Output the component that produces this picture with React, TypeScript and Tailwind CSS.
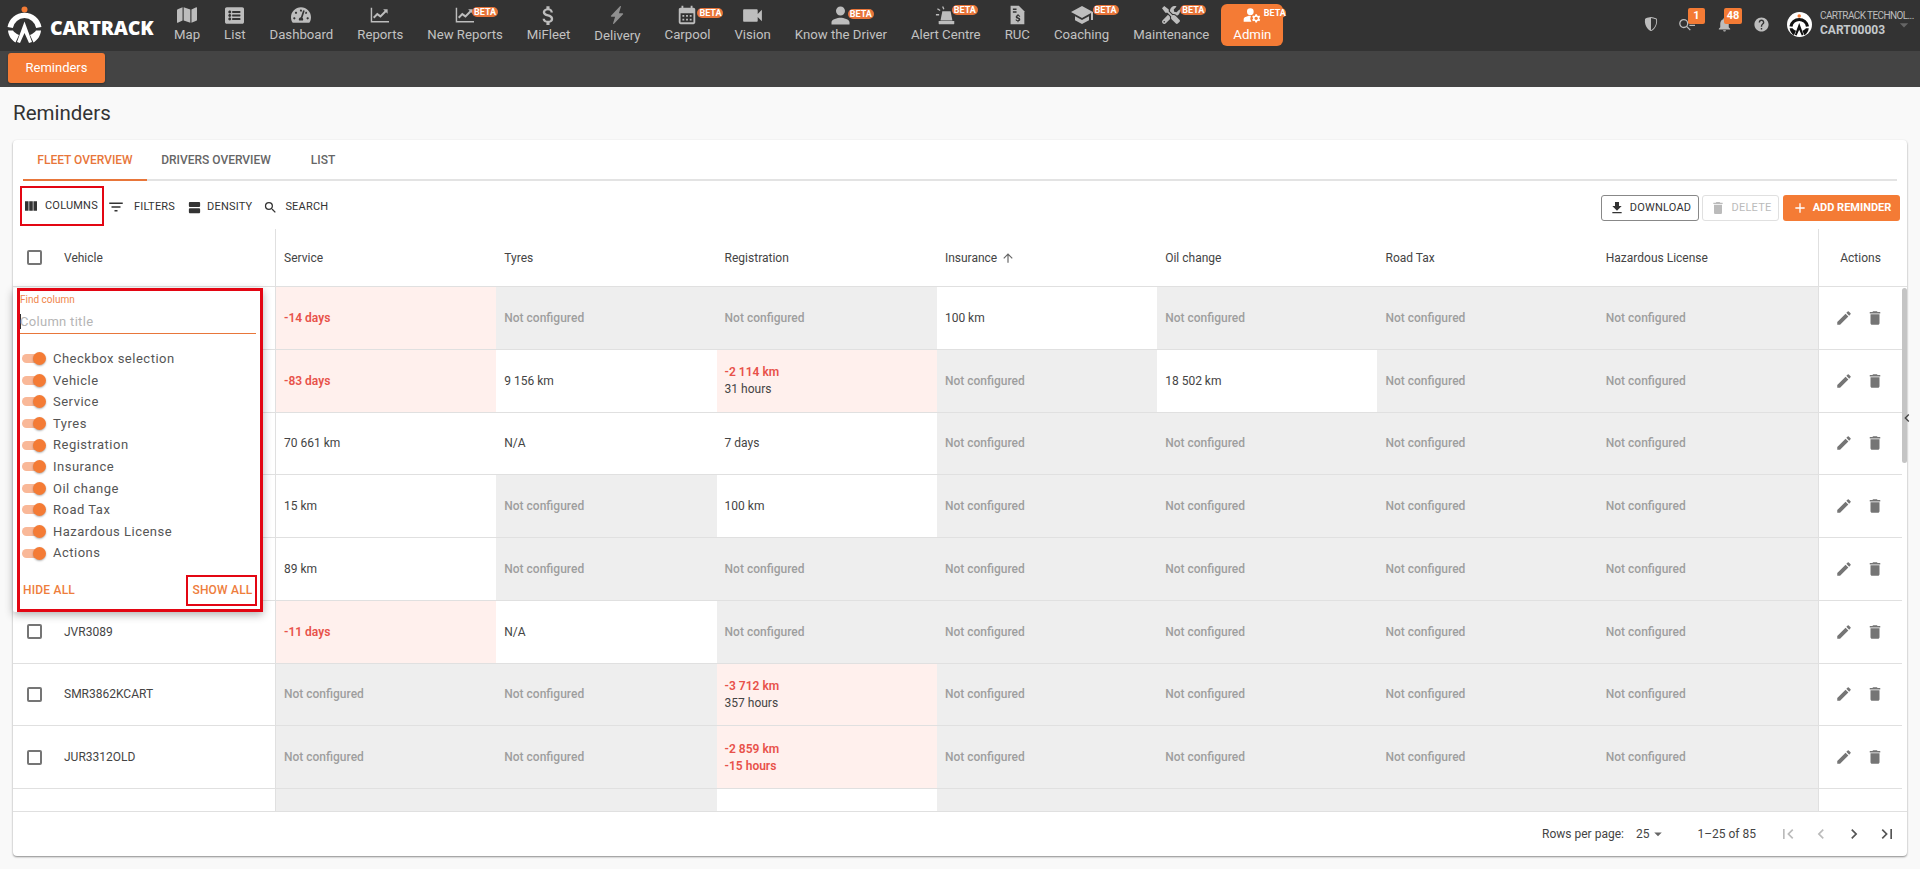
import React from "react";
import {
  MdVideocam, MdPerson, MdSchool, MdManageAccounts, MdNotifications, MdHelp, MdViewColumn,
  MdFilterList, MdViewAgenda, MdSearch, MdFileDownload, MdDelete, MdEdit, MdFirstPage, MdLastPage,
  MdChevronLeft, MdChevronRight, MdArrowUpward, MdAdd, MdArrowDropDown, MdCalendarMonth, MdAttachMoney,
} from "react-icons/md";
import { FaListAlt, FaMap, FaTachometerAlt, FaTools } from "react-icons/fa";
import { BsLightningChargeFill, BsShieldShaded } from "react-icons/bs";

function Logo({ dark = false, small = false }: { dark?: boolean; small?: boolean }) {
  const c = dark ? "#111" : "#fff";
  return (
    <svg viewBox="0 0 36 38" className={small ? "w-[21px] h-[22px]" : "w-[36px] h-[38px]"} fill="none">
      <circle cx="17.5" cy="3.6" r="3" fill="#f47b35" />
      <path d="M3.2 21.5 A14.5 14.5 0 0 1 31.8 21.5" stroke={c} strokeWidth="5.4" />
      <path d="M1 24.5 C1.5 30 4.5 34 8.5 36.5 L12 29 C9 27.5 7 26 6 24.5 Z" fill={c} />
      <path d="M34 24.5 C33.5 30 30.5 34 26.5 36.5 L23 29 C26 27.5 28 26 29 24.5 Z" fill={c} />
      <path d="M10 36 L17.5 15.5 L25 36 L22 37 L17.5 27 L13 37 Z" fill={c} />
    </svg>
  );
}

function Siren() {
  return (
    <svg viewBox="0 0 24 24" className="w-[22px] h-[22px]" fill="currentColor">
      <path d="M8 8h9l2 10H6z" />
      <rect x="4" y="18.5" width="17" height="3.500" rx="0.5" />
      <path d="M1 11h3.500v1.500H1zM3 4.500l3 2-.8 1.200-3-2zM9 2.500l1.300 3-1.300.6-1.300-3z" />
    </svg>
  );
}

function Ruc() {
  return (
    <svg viewBox="0 0 24 24" className="w-[22px] h-[22px]" fill="currentColor">
      <path d="M5 2h9l6 6v14H5z" />
      <path d="M7.500 5h4v1.500h-4zM7.500 8h4v1.500h-4z" fill="#333" />
      <path d="M12.600 11v1.100c-1.200.2-2 1-2 2 0 1.200 1 1.700 2 2 .9.300 1.200.5 1.200.9s-.4.700-1 .7-1.100-.3-1.200-.8h-1.200c.1 1.100 1 1.800 2.200 1.900V20h1v-1.200c1.200-.2 2-.9 2-2 0-1.300-1-1.800-2-2.100-.9-.3-1.200-.5-1.200-.8 0-.4.4-.7.9-.7s.9.300 1 .7h1.200c-.1-1-.9-1.700-1.900-1.800V11z" fill="#333" />
    </svg>
  );
}

function Chart() {
  return (
    <svg viewBox="0 0 22 20" className="w-[20px] h-[18px]" fill="none" stroke="currentColor">
      <path d="M1.500 2v15.500H21" strokeWidth="1.600" />
      <path d="M4 13l4-4 3.500 2.500 6-6" strokeWidth="2.200" />
      <path d="M14.500 3.500h5v5z" fill="currentColor" stroke="none" />
    </svg>
  );
}

type NavItem = { label: string; icon: React.ReactNode; beta?: string; dim?: boolean };
const nav: NavItem[] = [
  { label: "Map", icon: <FaMap size={20} /> },
  { label: "List", icon: <FaListAlt size={19} /> },
  { label: "Dashboard", icon: <FaTachometerAlt size={20} /> },
  { label: "Reports", icon: <Chart /> },
  { label: "New Reports", icon: <Chart />, beta: "ml-[7px] top-[7px]" },
  { label: "MiFleet", icon: <MdAttachMoney size={25} /> },
  { label: "Delivery", icon: <BsLightningChargeFill size={18} />, dim: true },
  { label: "Carpool", icon: <MdCalendarMonth size={22} />, beta: "ml-[10px] top-[8px]" },
  { label: "Vision", icon: <MdVideocam size={25} /> },
  { label: "Know the Driver", icon: <MdPerson size={27} />, beta: "ml-[7px] top-[9px]" },
  { label: "Alert Centre", icon: <Siren />, beta: "ml-[6px] top-[5px]" },
  { label: "RUC", icon: <Ruc /> },
  { label: "Coaching", icon: <MdSchool size={24} />, beta: "ml-[11px] top-[5px]" },
  { label: "Maintenance", icon: <FaTools size={18} />, beta: "ml-[9px] top-[5px]" },
];

function Beta({ cls }: { cls: string }) {
  return (
    <span className={`absolute left-1/2 ${cls} h-[10px] w-[26px] rounded-full bg-[#e8753a] text-white text-[9px] leading-[10px] font-bold text-center`}>
      BETA
    </span>
  );
}

type Cell = { t?: string; t2?: string; k: "nc" | "red" | "plain" | "blank" | "gray"; red2?: boolean };
const nc: Cell = { t: "Not configured", k: "nc" };
const p = (t: string): Cell => ({ t, k: "plain" });
const r = (t: string, t2?: string, red2?: boolean): Cell => ({ t, t2, k: "red", red2 });
const rows: { v: string; cells: Cell[] }[] = [
  { v: "", cells: [r("-14 days"), nc, nc, p("100 km"), nc, nc, nc] },
  { v: "", cells: [r("-83 days"), p("9 156 km"), r("-2 114 km", "31 hours"), nc, p("18 502 km"), nc, nc] },
  { v: "", cells: [p("70 661 km"), p("N/A"), p("7 days"), nc, nc, nc, nc] },
  { v: "", cells: [p("15 km"), nc, p("100 km"), nc, nc, nc, nc] },
  { v: "", cells: [p("89 km"), nc, nc, nc, nc, nc, nc] },
  { v: "JVR3089", cells: [r("-11 days"), p("N/A"), nc, nc, nc, nc, nc] },
  { v: "SMR3862KCART", cells: [nc, nc, r("-3 712 km", "357 hours"), nc, nc, nc, nc] },
  { v: "JUR3312OLD", cells: [nc, nc, r("-2 859 km", "-15 hours", true), nc, nc, nc, nc] },
  { v: "", cells: [{ k: "gray" }, { k: "gray" }, { k: "blank" }, { k: "gray" }, { k: "gray" }, { k: "gray" }, { k: "gray" }] },
];

const colGrid = "grid grid-cols-[263px_repeat(7,220.3px)_1fr]";
const cols = ["Service", "Tyres", "Registration", "Insurance", "Oil change", "Road Tax", "Hazardous License"];
const toggles = ["Checkbox selection", "Vehicle", "Service", "Tyres", "Registration", "Insurance", "Oil change", "Road Tax", "Hazardous License", "Actions"];

function Box() {
  return <span className="block w-[15px] h-[15px] shrink-0 border-2 border-[#757575] rounded-[2px]" />;
}

function DataCell({ c }: { c: Cell }) {
  const bg = c.k === "nc" || c.k === "gray" ? "bg-[#eeeeee]" : c.k === "red" ? "bg-[#fff0ed]" : "bg-white";
  return (
    <div className={`${bg} pl-[8px] pt-[1px] flex flex-col justify-center text-[12px] leading-[17px]`}>
      {c.t && (
        <span className={c.k === "nc" ? "text-[#9e9e9e] font-medium" : c.k === "red" ? "text-[#e8524a] font-semibold" : "text-[#444]"}>{c.t}</span>
      )}
      {c.t2 && <span className={c.red2 ? "text-[#e8524a] font-semibold" : "text-[#444]"}>{c.t2}</span>}
    </div>
  );
}

export default function App() {
  return (
    <div className="w-full h-[869px] overflow-hidden flex flex-col bg-[#f9f9f9] font-['Roboto',sans-serif] text-[#333]">
      <header className="h-[51px] shrink-0 bg-[#333333] flex">
        <div className="w-[162px] shrink-0 flex items-start pl-[7px] pt-[6px]">
          <Logo />
          <span className="ml-[7px] mt-[9px] text-white text-[19.5px] leading-[26px] font-black tracking-[-0.2px] font-['Open_Sans',sans-serif]">CARTRACK</span>
        </div>
        <nav className="flex">
          {nav.map((n) => (
            <div key={n.label} className="relative px-3 flex flex-col items-center pt-[4px] text-[#c2c2c2]">
              <div className={`h-[22px] flex items-center justify-center ${n.dim ? "text-[#8f8f8f]" : "text-[#bdbdbd]"}`}>{n.icon}</div>
              <span className={`text-[13.2px] whitespace-nowrap leading-[20px] ${n.dim ? "" : "-mt-[1px]"}`}>{n.label}</span>
              {n.beta && <Beta cls={n.beta} />}
            </div>
          ))}
          <div className="relative mt-[4px] w-[62px] h-[42px] rounded-[6px] bg-[#f47b35] flex flex-col items-center text-white">
            <div className="h-[22px] flex items-center"><MdManageAccounts size={20} /></div>
            <span className="text-[13.2px] leading-[20px] -mt-[1px]">Admin</span>
            <span className="absolute left-1/2 ml-[11px] top-[4px] w-[23px] h-[10px] rounded-full bg-[#f47b35] text-white text-[9px] leading-[10px] font-bold text-center">BETA</span>
          </div>
        </nav>
        <div className="ml-auto flex items-start text-[#bdbdbd]">
          <div className="w-[37px] h-[48px] flex items-center justify-center"><BsShieldShaded size={14} /></div>
          <div className="relative w-[37px] h-[48px] flex items-center justify-center">
            <svg viewBox="0 0 20 16" className="w-[19px] h-[15px]" fill="none" stroke="currentColor" strokeWidth="1.4">
              <circle cx="6" cy="7" r="4.2" />
              <path d="M9 10l4 4M11 6h7M12 9h6" />
            </svg>
            <span className="absolute left-[19px] top-[8px] w-[17px] h-[16px] rounded-[2px] bg-[#f47b35] text-white text-[11px] leading-[16px] font-bold text-center">1</span>
          </div>
          <div className="relative w-[37px] h-[48px] flex items-center justify-center">
            <MdNotifications size={17} />
            <span className="absolute left-[18px] top-[8px] w-[18px] h-[16px] rounded-[2px] bg-[#f47b35] text-white text-[11px] leading-[16px] font-bold text-center">48</span>
          </div>
          <div className="w-[37px] h-[48px] flex items-center justify-center"><MdHelp size={17} /></div>
          <div className="ml-[7px] mt-[12px] w-[25px] h-[25px] rounded-full bg-white flex items-center justify-center shrink-0"><Logo dark small /></div>
          <div className="relative ml-[8px] w-[100px] pt-[9px]">
            <div className="text-[10px] leading-[14px] tracking-[-0.6px] text-[#bdbdbd] whitespace-nowrap">CARTRACK TECHNOL...</div>
            <div className="text-[12px] leading-[15px] font-bold text-[#c4c9cc]">CART00003</div>
            <MdArrowDropDown size={20} className="absolute right-[6px] top-[15px] text-[#666]" />
          </div>
        </div>
      </header>

      <div className="h-[36px] shrink-0 bg-[#444444] pl-[8px] pt-[2px]">
        <div className="w-[97px] h-[30px] rounded-[3px] bg-[#f47b35] text-white text-[13px] flex items-center justify-center shadow-[0_1px_2px_rgba(0,0,0,0.3)]">Reminders</div>
      </div>

      <main className="flex-1 min-h-0 pl-[13px] pr-[13px] flex flex-col">
        <h1 className="h-[53px] shrink-0 flex items-center text-[20.5px] font-normal text-[#333]">Reminders</h1>
        <section className="relative w-[1894px] h-[716px] bg-white rounded-[4px] shadow-[0_1px_2px_rgba(0,0,0,0.45)] flex flex-col">
          <div className="mx-[10px] h-[41px] shrink-0 flex border-b-2 border-[#e3e3e3] text-[12px] font-medium">
            <div className="w-[124px] h-[41px] flex items-center justify-center text-[#e8763a] border-b-2 border-[#e8763a]">FLEET OVERVIEW</div>
            <div className="w-[138px] h-[39px] flex items-center justify-center text-[#666]">DRIVERS OVERVIEW</div>
            <div className="w-[76px] h-[39px] flex items-center justify-center text-[#666]">LIST</div>
          </div>

          <div className="h-[48px] shrink-0 flex items-start pl-[7px] pr-[7px] text-[11px] tracking-[0.2px] text-[#333]">
            <div className="w-[84px] h-[40px] mt-[5px] border-[2px] border-[#e30613] flex items-center pl-[1px] gap-[6px]">
              <MdViewColumn size={16} /> <span>COLUMNS</span>
            </div>
            <div className="h-[52px] flex items-center ml-[3px] gap-[9px]"><MdFilterList size={18} /><span>FILTERS</span></div>
            <div className="h-[52px] flex items-center ml-[12px] gap-[5px]"><MdViewAgenda size={15} /><span>DENSITY</span></div>
            <div className="h-[52px] flex items-center ml-[11px] gap-[7px]"><MdSearch size={15} /><span>SEARCH</span></div>
            <div className="ml-auto mt-[14px] flex items-start">
              <div className="w-[98px] h-[26px] rounded-[3px] border border-[#888] flex items-center justify-center gap-[5px]"><MdFileDownload size={16} /><span>DOWNLOAD</span></div>
              <div className="ml-[3px] w-[77px] h-[26px] rounded-[3px] border border-[#e0e0e0] flex items-center justify-center gap-[6px] text-[#bbbbbb]"><MdDelete size={16} /><span>DELETE</span></div>
              <div className="ml-[4px] w-[117px] h-[26px] rounded-[3px] bg-[#f47b35] text-white font-bold tracking-normal flex items-center justify-center gap-[5px]"><MdAdd size={16} /><span>ADD REMINDER</span></div>
            </div>
          </div>

          <div className={`${colGrid} h-[58px] shrink-0 pr-[5px] border-b border-[#e0e0e0] text-[12px] text-[#444]`}>
            <div className="border-r border-[#e0e0e0] flex items-center pl-[14px] gap-[22px]"><Box /><span>Vehicle</span></div>
            {cols.map((c) => (
              <div key={c} className="pl-[8px] flex items-center gap-[4px]">
                <span>{c}</span>
                {c === "Insurance" && <MdArrowUpward size={14} className="text-[#666]" />}
              </div>
            ))}
            <div className="border-l border-[#e0e0e0] flex items-center justify-center">Actions</div>
          </div>

          <div className="h-[524px] shrink-0 flex overflow-hidden">
            <div className="flex-1 min-w-0">
              {rows.map((row, i) => (
                <div key={i} className={`${colGrid} h-[62.75px] border-b border-[#e0e0e0]`}>
                  <div className="border-r border-[#e0e0e0] flex items-center pl-[14px] gap-[22px] text-[12px] text-[#444]">
                    <Box />
                    <span>{row.v}</span>
                  </div>
                  {row.cells.map((c, j) => <DataCell key={j} c={c} />)}
                  <div className="border-l border-[#e0e0e0] flex items-center text-[#757575] pl-[16px] gap-[13px]">
                    {i < 8 && <><MdEdit size={18} /><MdDelete size={18} /></>}
                  </div>
                </div>
              ))}
            </div>
            <div className="w-[5px] shrink-0">
              <div className="mt-[1px] h-[175px] rounded-full bg-[#c4c4c4]" />
            </div>
          </div>

          <footer className="h-[44px] shrink-0 border-t border-[#e0e0e0] flex items-center justify-end pr-[4px] text-[12px] text-[#444]">
            <span>Rows per page:</span>
            <span className="ml-[12px]">25</span>
            <MdArrowDropDown size={18} className="text-[#666]" />
            <span className="ml-[30px] mr-[15px]">1–25 of 85</span>
            <span className="w-[33px] flex justify-center text-[#bbb]"><MdFirstPage size={20} /></span>
            <span className="w-[33px] flex justify-center text-[#bbb]"><MdChevronLeft size={20} /></span>
            <span className="w-[33px] flex justify-center text-[#555]"><MdChevronRight size={20} /></span>
            <span className="w-[33px] flex justify-center text-[#555]"><MdLastPage size={20} /></span>
          </footer>

          <MdChevronLeft size={16} className="absolute right-[-8px] top-[270px] text-[#444]" />

          <div className="absolute left-0 top-[148px] w-[250px] h-[324px] pl-[4px] bg-white rounded-[2px] shadow-[0_3px_8px_rgba(0,0,0,0.3)] z-10">
            <div className="h-full border-[3px] border-[#e30613] pr-[1px] flex flex-col">
              <div className="mt-[2px] text-[10px] leading-[14px] text-[#f0854a]">Find column</div>
              <div className="mr-[3px] mt-[3px] h-[24px] border-b border-[#e8763a] flex items-center text-[13px] text-[#b5b5b5] tracking-[0.3px]">
                <span className="w-[1px] h-[15px] bg-[#333]" />
                <span className="-ml-[1px]">Column title</span>
              </div>
              <div className="mt-[14px]">
                {toggles.map((t) => (
                  <div key={t} className="h-[21.6px] flex items-center text-[13px] tracking-[0.5px] text-[#555]">
                    <span className="relative ml-[2px] w-[24px] h-[13px] shrink-0">
                      <span className="absolute left-0 top-[2px] w-[20px] h-[9px] rounded-full bg-[#f9b898]" />
                      <span className="absolute right-0 top-0 w-[13px] h-[13px] rounded-full bg-[#f47b35] shadow-[0_1px_2px_rgba(0,0,0,0.3)]" />
                    </span>
                    <span className="ml-[7px]">{t}</span>
                  </div>
                ))}
              </div>
              <div className="mt-[11px] pl-[3px] pr-[2px] flex items-center justify-between text-[12px] font-medium tracking-[0.2px] text-[#ee7d3c]">
                <span>HIDE ALL</span>
                <span className="w-[71px] h-[31px] border-2 border-[#e30613] flex items-center justify-center pl-[2px]">SHOW ALL</span>
              </div>
            </div>
          </div>
        </section>
      </main>
    </div>
  );
}
